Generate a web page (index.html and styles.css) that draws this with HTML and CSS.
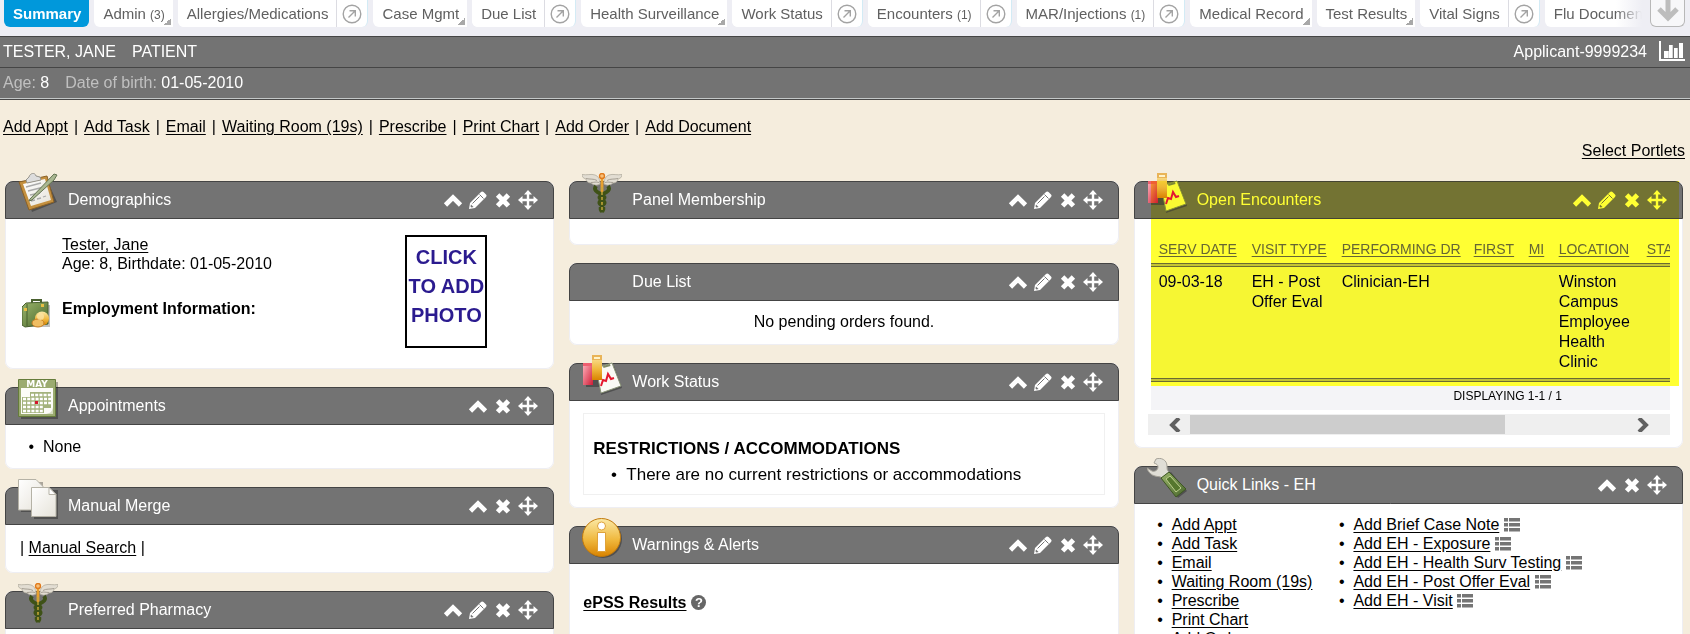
FILE: index.html
```html
<!DOCTYPE html>
<html lang="en">
<head>
<meta charset="utf-8">
<title>Patient Summary</title>
<link rel="stylesheet" href="styles.css">
</head>
<body>
<svg class="defs" aria-hidden="true">
  <defs>
    <linearGradient id="paper" x1="0" y1="0" x2="1" y2="1"><stop offset="0" stop-color="#fff"/><stop offset="1" stop-color="#e6e3da"/></linearGradient>
    <linearGradient id="amber" x1="0" y1="0" x2="0" y2="1"><stop offset="0" stop-color="#fbe9a6"/><stop offset=".55" stop-color="#f0b93f"/><stop offset="1" stop-color="#d98300"/></linearGradient>
    <linearGradient id="red" x1="0" y1="0" x2="1" y2="1"><stop offset="0" stop-color="#ffb3bd"/><stop offset="1" stop-color="#cf1c36"/></linearGradient>
    <linearGradient id="green" x1="0" y1="0" x2="1" y2="1"><stop offset="0" stop-color="#9bb56c"/><stop offset="1" stop-color="#48662a"/></linearGradient>
  </defs>
  <symbol id="i-up" viewBox="0 0 20 20"><path d="M2.500 15 10 7.500l7.500 7.500" fill="none" stroke="currentColor" stroke-width="4.600"/></symbol>
  <symbol id="i-edit" viewBox="0 0 20 20"><path d="M1 19l1-6L12.500 2.500c1-1 2-1.500 3-.5l2.500 2.500c1 1 .5 2-.5 3L7 18z" fill="currentColor"/><path d="M11.500 4.500l4 4M4.500 13.500l7-7" stroke="#737373" stroke-width="1" fill="none"/><path d="M3 14.500l2.500 2.500-2 .6-1-1z" fill="#737373"/></symbol>
  <symbol id="i-close" viewBox="0 0 20 20"><path d="M4 4.500l12 12M16 4.500l-12 12" stroke="currentColor" stroke-width="5.400" fill="none"/></symbol>
  <symbol id="i-move" viewBox="0 0 20 20"><path d="M10 3v14M3 10h14" stroke="currentColor" stroke-width="2.400"/><path d="M10 0l4 4.500H6zM10 20l4-4.500H6zM0 10l4.500-4v8zM20 10l-4.500-4v8z" fill="currentColor"/></symbol>
  <symbol id="i-go" viewBox="0 0 20 20"><circle cx="10" cy="10" r="8.800" fill="none" stroke="#a3a3a3" stroke-width="1.400"/><path d="M6.500 13.500l6.500-6.500M7.500 6.700h5.800v5.800" fill="none" stroke="#a3a3a3" stroke-width="1.400"/></symbol>
  <symbol id="i-list" viewBox="0 0 16 14"><path d="M0 0h4v3.500H0zM5 0h11v3.500H5zM0 5h4v3.500H0zM5 5h11v3.500H5zM0 10h4v3.500H0zM5 10h11v3.500H5z" fill="#757575"/></symbol>
  <symbol id="i-clip" viewBox="0 0 40 40"><path d="M5 12l24-5 10 22-25 10z" fill="#000" opacity=".3"/><path d="M1 9l28-6 7 26-25 8z" fill="#c4903f" stroke="#8b6126"/><path d="M5 11l22-5 6 21-20 6z" fill="url(#paper)"/><path d="M8 7l3-3c1-4 6-5 7-1l4 1 1 3-14 3z" fill="#ddd" stroke="#96948c"/><path d="M8 14l15-4M10 18l16-4M12 22l10-2M13 28l4-1m2-1 4-1m2-1 3-1" stroke="#aaa" stroke-width="1.300"/><path d="M12 26L36 1l3 1-3 5-22 20-3 1z" fill="#a9b791" stroke="#647453"/></symbol>
  <symbol id="i-cal" viewBox="0 0 40 40"><path d="M3 3h37v37H3z" fill="#000" opacity=".3"/><path d="M.5.5h37v37H.5z" fill="#9bab70" stroke="#657c3b"/><path d="M3 9h32v26H3z" fill="#fcfcf8"/><path d="M12 13h21v16h-7v5H4V18h8z" fill="#a4b37d"/><path d="M13 16h20M5 20h28M5 24h28M5 28h21M5 32h21" stroke="#fff" stroke-width="2.500" stroke-dasharray="3 1.200"/><path d="M17 22h3v3h-3z" fill="#d3172b"/><path d="M35 28v7h-9c6 0 8-2 9-7z" fill="#d5ddc0"/></symbol>
  <symbol id="i-copy" viewBox="0 0 40 40"><path d="M3 3h22v30H3zM16 11h24v29H16z" fill="#000" opacity=".3"/><path d="M.5.5H18l7 7V31H.5z" fill="url(#paper)" stroke="#b5b2a6"/><path d="M13.500 8.500H31l7 7v22H13.500z" fill="url(#paper)" stroke="#b5b2a6"/><path d="M31 8.500v7h7z" fill="#fff" stroke="#b5b2a6"/></symbol>
  <symbol id="i-cad" viewBox="0 0 40 40"><path d="M18 11C15 13 11 12 9 10 6 10 4 8 4 6 1 5 0 4 0 1.500 5 2.500 9 .5 13 2c3 1 5 4 5 9zM22 11c3 2 7 1 9-1 3 0 5-2 5-4 3-1 4-2 4-4.500C35 2.500 31 .5 27 2c-3 1-5 4-5 9z" fill="#e2ddd2" stroke="#b3ada0" stroke-width=".8"/><path d="M4 5.500c4 1 8 0 11 2M9 9.500c3 0 5-1 8 0M36 5.500c-4 1-8 0-11 2M31 9.500c-3 0-5-1-8 0" fill="none" stroke="#9f998c" stroke-width=".9"/><path d="M20 4v34" stroke="#e8a02f" stroke-width="2.800"/><path d="M14 13c-3 4 1 6 5 8s5 4 1 6-3 4 0 6 1 4 0 6M26 13c3 4-1 6-5 8s-5 4-1 6 3 4 0 6-1 4 0 6" fill="none" stroke="#3f5217" stroke-width="3.800"/><path d="M20 14v25" stroke="#c7a93a" stroke-width="1.400" stroke-dasharray="3 2"/><circle cx="20" cy="3" r="2.500" fill="#f7c07a" stroke="#e07a1c" stroke-width="1.400"/></symbol>
  <symbol id="i-chart" viewBox="0 0 40 40"><path d="M4 12h18v20H4zM18 14l14-3 8 22-21 7z" fill="#000" opacity=".3"/><path d="M14 13l16-5 9 23-20 7z" fill="#fafaf5" stroke="#8a9478"/><path d="M21 11l7-2 .5 2-7 2z" fill="#7f8a66"/><path d="M19 31l2-6 3 1 2-7 3 5 3-1" fill="none" stroke="#e3172f" stroke-width="2"/><path d="M1 8h10v22H1z" fill="url(#red)"/><path d="M1 8h10v3H1z" fill="#ef5f70"/><path d="M10 0h10v25H10z" fill="url(#amber)"/><path d="M10 0h10v5H10z" fill="#e9b458"/><path d="M12 2h6v2h-6z" fill="#fff3c8"/></symbol>
  <symbol id="i-info" viewBox="0 0 40 40"><circle cx="21" cy="21" r="19" fill="#000" opacity=".3"/><circle cx="19.500" cy="19.500" r="19" fill="url(#amber)" stroke="#c27a0c"/><circle cx="19.500" cy="8" r="4" fill="#fff" stroke="#dfa23a"/><path d="M15.500 14.500h8v19h-8z" fill="#fff" stroke="#dfa23a"/></symbol>
  <symbol id="i-wrench" viewBox="0 0 40 40"><path d="M16 19l8-5 16 19-9 7z" fill="#000" opacity=".3"/><path d="M9 1c5-2 11 1 11 7 0 3 0 4 2 6l-7 6c-2-2-4-1-7-2-4-1-7-4-8-8l5 3c3 1 6-1 6-4 0-2-1-3-4-4z" fill="#e0ded6" stroke="#a5a298"/><path d="M14 20l8-6 17 17-10 8z" fill="url(#green)" stroke="#3e5822"/><path d="M19 21l4-3 11 12-5 4z" fill="#56772e" stroke="#bed08e"/></symbol>
  <symbol id="i-case" viewBox="0 0 30 30"><path d="M4 6h24v22H4z" fill="#000" opacity=".25"/><path d="M10 5V1h9v4" fill="none" stroke="#49602f" stroke-width="2"/><path d="M0 8l4-4 22-1v22L3 28l-3-2z" fill="url(#green)" stroke="#49602f"/><path d="M5 5v22" stroke="#48602d"/><path d="M2 9h3v3H2zM19 5h3v3h-3z" fill="#e8bf45"/><circle cx="20" cy="19.500" r="7" fill="url(#amber)"/><ellipse cx="16" cy="24" rx="6" ry="4" fill="#efbd62" stroke="#c57c22"/><circle cx="18.500" cy="17.500" r="3.500" fill="#fbe3a4" opacity=".8"/></symbol>
</svg>

<nav class="tabs" aria-label="Chart sections">
  <div class="tab-list">
    <a class="tab active" href="#">Summary</a>
    <a class="tab menu" href="#">Admin <small>(3)</small></a>
    <span class="split"><a class="tab" href="#">Allergies/Medications</a><button class="go" aria-label="Open allergies"><svg><use href="#i-go"/></svg></button></span>
    <a class="tab menu" href="#">Case Mgmt</a>
    <span class="split"><a class="tab" href="#">Due List</a><button class="go" aria-label="Open due list"><svg><use href="#i-go"/></svg></button></span>
    <a class="tab menu" href="#">Health Surveillance</a>
    <span class="split"><a class="tab" href="#">Work Status</a><button class="go" aria-label="Open work status"><svg><use href="#i-go"/></svg></button></span>
    <span class="split"><a class="tab" href="#">Encounters <small>(1)</small></a><button class="go" aria-label="Open encounters"><svg><use href="#i-go"/></svg></button></span>
    <span class="split"><a class="tab" href="#">MAR/Injections <small>(1)</small></a><button class="go" aria-label="Open injections"><svg><use href="#i-go"/></svg></button></span>
    <a class="tab menu" href="#">Medical Record</a>
    <a class="tab menu" href="#">Test Results</a>
    <span class="split"><a class="tab" href="#">Vital Signs</a><button class="go" aria-label="Open vital signs"><svg><use href="#i-go"/></svg></button></span>
    <a class="tab" href="#">Flu Documentation</a>
  </div>
  <button class="more" aria-label="More tabs"><svg viewBox="0 0 22 22"><path d="M11 0v17M2 9l9 9 9-9" fill="none" stroke="#bdbdbd" stroke-width="5"/></svg></button>
</nav>

<header class="patient">
  <div class="patient-row">
    <span class="name">TESTER, JANE</span><span>PATIENT</span>
    <span class="applicant">Applicant-9999234</span>
    <button class="stats" aria-label="Statistics"><svg viewBox="0 0 26 20"><path d="M1 0v19h25" fill="none" stroke="#fff" stroke-width="2"/><path d="M5 10h4v7H5zM10 4h3v13h-3zM15 7h3v10h-3zM20 2h4v15h-4z" fill="#fff"/><path d="M9 10h1v7H9zM13 4h1v13h-1zM18 7h1v10h-1z" fill="#d5d5d5"/></svg></button>
  </div>
  <div class="patient-row">
    <span class="age"><span class="label">Age:</span> 8</span><span><span class="label">Date of birth:</span> 01-05-2010</span>
  </div>
</header>

<main>
  <div class="actions"><a href="#">Add Appt</a><span>|</span><a href="#">Add Task</a><span>|</span><a href="#">Email</a><span>|</span><a href="#">Waiting Room (19s)</a><span>|</span><a href="#">Prescribe</a><span>|</span><a href="#">Print Chart</a><span>|</span><a href="#">Add Order</a><span>|</span><a href="#">Add Document</a></div>
  <p class="select"><a href="#">Select Portlets</a></p>

  <div class="columns">
    <div class="column">
      <section class="card">
        <header class="card-head"><svg class="badge"><use href="#i-clip"/></svg><h2>Demographics</h2>
          <button class="tool" aria-label="Collapse"><svg><use href="#i-up"/></svg></button><button class="tool" aria-label="Edit"><svg><use href="#i-edit"/></svg></button><button class="tool" aria-label="Close"><svg><use href="#i-close"/></svg></button><button class="tool" aria-label="Move"><svg><use href="#i-move"/></svg></button></header>
        <div class="demographics">
          <div class="person">
            <p><a href="#">Tester, Jane</a></p>
            <p>Age: 8, Birthdate: 01-05-2010</p>
            <div class="employment"><svg class="case"><use href="#i-case"/></svg><h3>Employment Information:</h3></div>
          </div>
          <button class="photo"><span>CLICK</span><span>TO ADD</span><span>PHOTO</span></button>
        </div>
      </section>
      <section class="card">
        <header class="card-head"><svg class="badge" viewBox="0 0 40 40"><use href="#i-cal"/><text x="19" y="8" text-anchor="middle" class="cal-month">MAY</text></svg><h2>Appointments</h2>
          <button class="tool" aria-label="Collapse"><svg><use href="#i-up"/></svg></button><button class="tool" aria-label="Close"><svg><use href="#i-close"/></svg></button><button class="tool" aria-label="Move"><svg><use href="#i-move"/></svg></button></header>
        <ul class="simple"><li>None</li></ul>
      </section>
      <section class="card">
        <header class="card-head"><svg class="badge"><use href="#i-copy"/></svg><h2>Manual Merge</h2>
          <button class="tool" aria-label="Collapse"><svg><use href="#i-up"/></svg></button><button class="tool" aria-label="Close"><svg><use href="#i-close"/></svg></button><button class="tool" aria-label="Move"><svg><use href="#i-move"/></svg></button></header>
        <p class="merge">| <a href="#">Manual Search</a> |</p>
      </section>
      <section class="card">
        <header class="card-head"><svg class="badge"><use href="#i-cad"/></svg><h2>Preferred Pharmacy</h2>
          <button class="tool" aria-label="Collapse"><svg><use href="#i-up"/></svg></button><button class="tool" aria-label="Edit"><svg><use href="#i-edit"/></svg></button><button class="tool" aria-label="Close"><svg><use href="#i-close"/></svg></button><button class="tool" aria-label="Move"><svg><use href="#i-move"/></svg></button></header>
        <div class="empty"></div>
      </section>
    </div>

    <div class="column">
      <section class="card">
        <header class="card-head"><svg class="badge"><use href="#i-cad"/></svg><h2>Panel Membership</h2>
          <button class="tool" aria-label="Collapse"><svg><use href="#i-up"/></svg></button><button class="tool" aria-label="Edit"><svg><use href="#i-edit"/></svg></button><button class="tool" aria-label="Close"><svg><use href="#i-close"/></svg></button><button class="tool" aria-label="Move"><svg><use href="#i-move"/></svg></button></header>
        <div class="empty"></div>
      </section>
      <section class="card">
        <header class="card-head"><h2>Due List</h2>
          <button class="tool" aria-label="Collapse"><svg><use href="#i-up"/></svg></button><button class="tool" aria-label="Edit"><svg><use href="#i-edit"/></svg></button><button class="tool" aria-label="Close"><svg><use href="#i-close"/></svg></button><button class="tool" aria-label="Move"><svg><use href="#i-move"/></svg></button></header>
        <p class="notice">No pending orders found.</p>
      </section>
      <section class="card">
        <header class="card-head"><svg class="badge"><use href="#i-chart"/></svg><h2>Work Status</h2>
          <button class="tool" aria-label="Collapse"><svg><use href="#i-up"/></svg></button><button class="tool" aria-label="Edit"><svg><use href="#i-edit"/></svg></button><button class="tool" aria-label="Close"><svg><use href="#i-close"/></svg></button><button class="tool" aria-label="Move"><svg><use href="#i-move"/></svg></button></header>
        <div class="work"><div class="work-box">
          <h3>RESTRICTIONS / ACCOMMODATIONS</h3>
          <ul><li>There are no current restrictions or accommodations</li></ul>
        </div></div>
      </section>
      <section class="card">
        <header class="card-head"><svg class="badge"><use href="#i-info"/></svg><h2>Warnings &amp; Alerts</h2>
          <button class="tool" aria-label="Collapse"><svg><use href="#i-up"/></svg></button><button class="tool" aria-label="Edit"><svg><use href="#i-edit"/></svg></button><button class="tool" aria-label="Close"><svg><use href="#i-close"/></svg></button><button class="tool" aria-label="Move"><svg><use href="#i-move"/></svg></button></header>
        <div class="alerts"><a href="#">ePSS Results</a><button class="help" aria-label="Help">?</button></div>
      </section>
    </div>

    <div class="column">
      <section class="card">
        <header class="card-head"><svg class="badge"><use href="#i-chart"/></svg><h2>Open Encounters</h2>
          <button class="tool" aria-label="Collapse"><svg><use href="#i-up"/></svg></button><button class="tool" aria-label="Edit"><svg><use href="#i-edit"/></svg></button><button class="tool" aria-label="Close"><svg><use href="#i-close"/></svg></button><button class="tool" aria-label="Move"><svg><use href="#i-move"/></svg></button></header>
        <div class="encounters">
          <div class="viewport">
            <table>
              <colgroup><col class="c-date"><col class="c-type"><col class="c-doctor"><col class="c-first"><col class="c-mi"><col class="c-location"><col class="c-status"></colgroup>
              <thead><tr><th><a href="#">SERV DATE</a></th><th><a href="#">VISIT TYPE</a></th><th><a href="#">PERFORMING DR</a></th><th><a href="#">FIRST</a></th><th><a href="#">MI</a></th><th><a href="#">LOCATION</a></th><th><a href="#">STATUS</a></th></tr></thead>
              <tbody><tr><td>09-03-18</td><td>EH - Post Offer Eval</td><td>Clinician-EH</td><td></td><td></td><td>Winston Campus Employee Health Clinic</td><td></td></tr></tbody>
            </table>
            <p class="paging">DISPLAYING 1-1 / 1</p>
          </div>
          <div class="scroll">
            <button class="scroll-prev" aria-label="Scroll left"><svg viewBox="0 0 12 14"><path d="M10 0L3 7l7 7" fill="none" stroke="#606060" stroke-width="4"/></svg></button>
            <div class="track"><div class="thumb"></div></div>
            <button class="scroll-next" aria-label="Scroll right"><svg viewBox="0 0 12 14"><path d="M2 0l7 7-7 7" fill="none" stroke="#606060" stroke-width="4"/></svg></button>
          </div>
        </div>
        <div class="highlight"></div>
      </section>
      <section class="card">
        <header class="card-head"><svg class="badge"><use href="#i-wrench"/></svg><h2>Quick Links - EH</h2>
          <button class="tool" aria-label="Collapse"><svg><use href="#i-up"/></svg></button><button class="tool" aria-label="Close"><svg><use href="#i-close"/></svg></button><button class="tool" aria-label="Move"><svg><use href="#i-move"/></svg></button></header>
        <div class="quick">
          <ul><li><a href="#">Add Appt</a></li><li><a href="#">Add Task</a></li><li><a href="#">Email</a></li><li><a href="#">Waiting Room (19s)</a></li><li><a href="#">Prescribe</a></li><li><a href="#">Print Chart</a></li><li><a href="#">Add Order</a></li></ul>
          <ul><li><a href="#">Add Brief Case Note</a> <svg class="list"><use href="#i-list"/></svg></li><li><a href="#">Add EH - Exposure</a> <svg class="list"><use href="#i-list"/></svg></li><li><a href="#">Add EH - Health Surv Testing</a> <svg class="list"><use href="#i-list"/></svg></li><li><a href="#">Add EH - Post Offer Eval</a> <svg class="list"><use href="#i-list"/></svg></li><li><a href="#">Add EH - Visit</a> <svg class="list"><use href="#i-list"/></svg></li></ul>
        </div>
      </section>
    </div>
  </div>
</main>
</body>
</html>
```
FILE: styles.css
```css
* { box-sizing: border-box; }
html { overflow: hidden auto; scrollbar-width: none; }
body {
  margin: 0;
  background: #f5eddd;
  color: #000;
  font: 16px/19px "Liberation Sans", Arial, sans-serif;
}
h2, h3, p, ul { margin: 0; padding: 0; font-size: 16px; }
ul { list-style-type: "•\00a0\00a0"; }
a { color: inherit; text-underline-offset: 2px; }
button { margin: 0; padding: 0; border: 0; background: none; color: inherit; font: inherit; cursor: pointer; }
.defs { position: absolute; width: 0; height: 0; }
.cal-month { font: bold 9px "DejaVu Sans", sans-serif; fill: #fff; }

/* tab strip */
.tabs { display: flex; justify-content: space-between; height: 36px; padding: 0 5px 0 4px; background: #eeeef4; }
.tab-list { position: relative; display: flex; flex: 1; gap: 5px; height: 27px; overflow: hidden; margin-right: 8px; }
.tab-list::after { content: ""; position: absolute; top: 0; right: 0; width: 26px; height: 27px; background: linear-gradient(90deg, transparent, #eeeef4); }
.tab, .split { position: relative; flex: none; height: 27px; background: #fff; border-radius: 0 0 6px 6px; white-space: nowrap; }
.tab { padding: 0 8px 0 9px; color: #606060; font-size: 15px; line-height: 27px; text-decoration: none; }
.tab small { font-size: 12px; }
.tab.active { background: #0098db; color: #fff; font-weight: bold; }
.tab.menu { border-bottom-right-radius: 0; }
.tab.menu::after { content: ""; position: absolute; right: 2px; bottom: 2px; width: 7px; height: 7px; background: linear-gradient(135deg, transparent 50%, #a8a8a8 50%); }
.split { display: flex; border-right: 1px solid #d3ebf5; }
.go { width: 31px; border-left: 1px solid #dcdce2; display: flex; align-items: center; justify-content: center; }
.go svg { width: 20px; height: 20px; }
.more { width: 35px; height: 27px; border: 1px solid #b8b8b8; border-top: 0; border-radius: 0 0 6px 6px; background: #f7f7f9; }
.more svg { display: block; width: 22px; height: 22px; margin: -4px auto 0; }

/* patient banner */
.patient { background: #737373; color: #fff; border-bottom: 1px solid #484848; box-shadow: inset 0 -1px #c4c8c8; }
.patient-row { display: flex; align-items: center; height: 31px; padding: 0 5px 2px 3px; border-top: 1px solid #454545; }
.patient-row + .patient-row { height: 32px; }
.name, .age { margin-right: 16px; }
.label { color: #c0c0c0; }
.applicant { margin-left: auto; }
.stats { width: 26px; height: 20px; margin-left: 12px; }
.stats svg { display: block; width: 26px; height: 20px; }

main { padding: 17px 7px 0 5px; }
.actions { display: flex; flex-wrap: wrap; gap: 0 6px; margin: 0 -2px; }
.select { margin: 5px -5px 21px; padding-right: 3px; text-align: right; }
.columns { display: grid; grid-template-columns: repeat(3, minmax(0, 1fr)); gap: 15px; }
.column { display: flex; flex-direction: column; gap: 18px; }

/* portlet */
.card { position: relative; border-radius: 8px; background: #fff; box-shadow: inset 0 0 0 1px #eeeef3; }
.card-head { position: relative; display: flex; align-items: center; gap: 5px; height: 38px; padding: 0 15px 0 62px; background: #737373; border: 1px solid #444; border-radius: 8px 8px 0 0; color: #fff; }
.card-head h2 { flex: 1; padding-bottom: 2px; font-weight: normal; }
.badge { position: absolute; left: 12px; top: -9px; width: 40px; height: 40px; }
.tool { width: 20px; height: 20px; }
.tool svg { display: block; width: 20px; height: 20px; }
.tool:has([href="#i-close"]) svg { padding: 1px; }

.demographics { display: flex; justify-content: space-between; padding: 16px 67px 21px 57px; }
.person { flex: 1; }
.employment { display: flex; align-items: flex-start; gap: 10px; margin: 26px 0 0 -40px; }
.case { width: 30px; height: 30px; }
.photo { display: flex; flex-direction: column; align-items: center; width: 82px; height: 113px; padding-top: 6px; border: 2px solid #000; background: #fff; color: #2b1b8f; font-weight: bold; font-size: 20px; line-height: 29px; white-space: nowrap; }
.simple { padding: 12px 0 13px 38px; }
.merge { padding: 13px 15px 16px; }
.empty { height: 26px; }
.notice { padding: 11px 0 14px; text-align: center; }
.work { padding: 12px 14px 13px; }
.work-box { padding: 25px 9px 10px; border: 1px solid #f0f0f0; font-size: 17px; }
.work-box h3 { font-size: 17px; }
.work-box ul { margin-top: 7px; padding-left: 33px; font-size: inherit; }
.alerts { display: flex; align-items: center; gap: 5px; padding: 29px 14px 40px; font-weight: bold; }
.help { width: 15px; height: 15px; border-radius: 50%; background: #666; color: #fff; font-size: 13px; line-height: 15px; }

/* encounters list */
.encounters { padding: 0 13px 13px 14px; }
.viewport { overflow: hidden; margin-left: 3px; }
table { width: 714px; table-layout: fixed; border-collapse: separate; border-spacing: 0; }
th, td { padding: 5px 0 6px 8px; border-bottom: 4px double #6a6a6a; text-align: left; vertical-align: top; background: linear-gradient(#c4c4c4, #c4c4c4) border-box 0 100% / 100% 4px no-repeat; }
th { padding: 22px 0 6px 8px; color: #666; font-size: 14px; line-height: 16px; font-weight: normal; white-space: nowrap; }
td { line-height: 20px; background-color: #f6f6f9; }
.c-date { width: 93px; }
.c-type { width: 90px; }
.c-doctor { width: 132px; }
.c-first { width: 55px; }
.c-mi { width: 30px; }
.c-location { width: 88px; }
.paging { width: 714px; height: 24px; margin: 4px 0; background: #f4f4f7; font-size: 12px; line-height: 20px; text-align: center; }
.scroll { display: flex; height: 21px; background: #efefef; }
.scroll-prev { width: 42px; }
.scroll-next { width: 54px; }
.scroll svg { display: block; width: 12px; height: 14px; margin: 0 auto; }
.scroll-prev svg { margin-right: 9px; }
.track { flex: 1; padding: 1px 0; }
.thumb { width: 74%; height: 19px; background: #cdcdcd; }
.highlight { position: absolute; top: 0; bottom: 62px; left: 17px; right: 4px; background: #ffff33; mix-blend-mode: darken; pointer-events: none; }

.quick { display: flex; padding: 11px 0 16px; }
.quick ul { padding-left: 38px; }
.quick ul + ul { padding-left: 41px; }
.list { width: 16px; height: 14px; vertical-align: -2px; }
```
